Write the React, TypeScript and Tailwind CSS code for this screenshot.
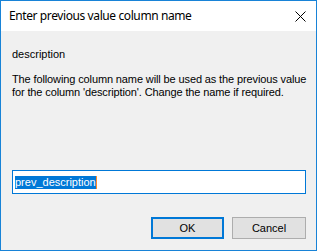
const App = () => {
  return (
    <div className="w-[317px] h-[251px] border border-[#1883d7] bg-[#f0f0f0] flex flex-col font-['Liberation_Sans',Arial,sans-serif] text-black">
      <div className="h-[30px] bg-white flex items-center justify-between pl-[8px] pr-[10px]">
        <span className="text-[12px] font-['Noto_Sans',sans-serif] tracking-[-0.4px] leading-none text-[#000]">
          Enter previous value column name
        </span>
        <svg width="11" height="11" viewBox="0 0 11 11">
          <path d="M0.5 0.5 L10.5 10.5 M10.5 0.5 L0.5 10.5" stroke="#000" strokeWidth="1" />
        </svg>
      </div>

      <div className="flex flex-col flex-1 pl-[11px] pr-[10px] text-[11px] leading-[13px]">
        <p className="mt-[17px]">description</p>
        <p className="mt-[12px] whitespace-nowrap tracking-[-0.12px]">
          The following column name will be used as the previous value
          <br />
          for the column 'description'. Change the name if required.
        </p>

        <div className="mt-[71px] h-[24px] border border-[#0078d7] bg-white flex items-center pl-[2px]">
          <span className="bg-[#0078d7] text-white leading-[13px]">prev_description</span>
          <span className="w-px h-[13px] bg-[#ff8a28]" />
        </div>

        <div className="mt-[23px] flex justify-end gap-[8px]">
          <button className="w-[73px] h-[22px] border-2 border-[#0078d7] bg-[#e1e1e1] text-[11px] leading-none">
            OK
          </button>
          <button className="w-[74px] h-[22px] border border-[#adadad] bg-[#e1e1e1] text-[11px] leading-none">
            Cancel
          </button>
        </div>
      </div>
    </div>
  );
};

export default App;
